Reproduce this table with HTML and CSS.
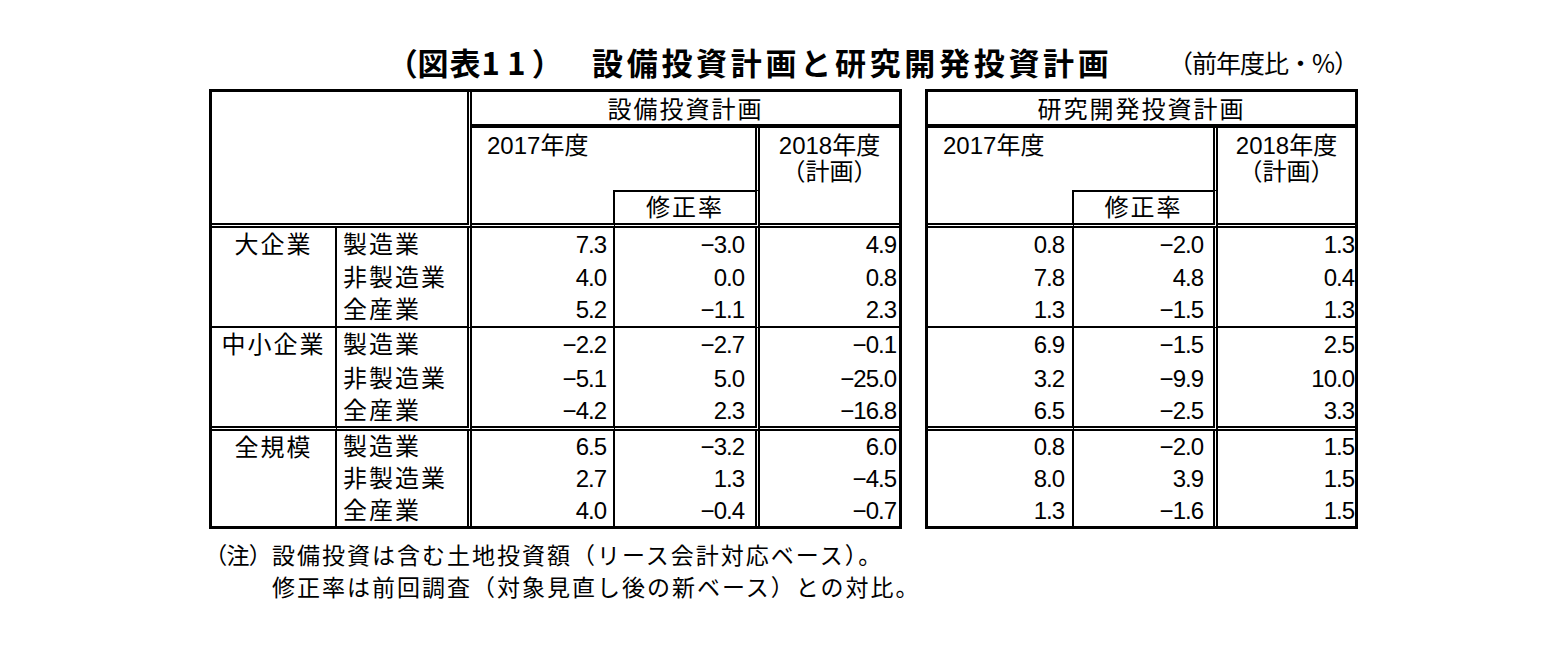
FILE: index.html
```html
<!DOCTYPE html>
<html lang="ja">
<head>
<meta charset="utf-8">
<title>（図表11） 設備投資計画と研究開発投資計画</title>
<link rel="stylesheet" href="styles.css">
</head>
<body>
<div class="page">
  <header class="head">
    <h1 class="title"><span class="fig">（図表<span class="fig-no">11</span>）</span><span class="main">設備投資計画と研究開発投資計画</span></h1>
    <span class="unit">（前年度比・%）</span>
  </header>

  <div class="tables">
    <table class="tbl tbl-capex">
      <colgroup>
        <col class="w-size"><col class="w-ind"><col class="w-a"><col class="w-b"><col class="w-c">
      </colgroup>
      <thead>
        <tr class="r-title">
          <th class="corner" colspan="2" rowspan="3"></th>
          <th class="title-cell jp" colspan="3">設備投資計画</th>
        </tr>
        <tr class="r-year">
          <th class="y17" colspan="2">2017年度</th>
          <th class="y18" rowspan="2">2018年度<br>（計画）</th>
        </tr>
        <tr class="r-rev">
          <th class="pad"></th>
          <th class="rev jp">修正率</th>
        </tr>
      </thead>
      <tbody class="g1">
        <tr><th class="size jp" rowspan="3">大企業</th><th class="ind jp">製造業</th><td class="a">7.3</td><td class="b">−3.0</td><td class="c">4.9</td></tr>
        <tr><th class="ind jp">非製造業</th><td class="a">4.0</td><td class="b">0.0</td><td class="c">0.8</td></tr>
        <tr class="last"><th class="ind jp">全産業</th><td class="a">5.2</td><td class="b">−1.1</td><td class="c">2.3</td></tr>
      </tbody>
      <tbody class="g2">
        <tr><th class="size jp" rowspan="3">中小企業</th><th class="ind jp">製造業</th><td class="a">−2.2</td><td class="b">−2.7</td><td class="c">−0.1</td></tr>
        <tr><th class="ind jp">非製造業</th><td class="a">−5.1</td><td class="b">5.0</td><td class="c">−25.0</td></tr>
        <tr class="last"><th class="ind jp">全産業</th><td class="a">−4.2</td><td class="b">2.3</td><td class="c">−16.8</td></tr>
      </tbody>
      <tbody class="g3">
        <tr><th class="size jp" rowspan="3">全規模</th><th class="ind jp">製造業</th><td class="a">6.5</td><td class="b">−3.2</td><td class="c">6.0</td></tr>
        <tr><th class="ind jp">非製造業</th><td class="a">2.7</td><td class="b">1.3</td><td class="c">−4.5</td></tr>
        <tr class="last"><th class="ind jp">全産業</th><td class="a">4.0</td><td class="b">−0.4</td><td class="c">−0.7</td></tr>
      </tbody>
    </table>

    <table class="tbl tbl-rd">
      <colgroup>
        <col class="rw-a"><col class="rw-b"><col class="rw-c">
      </colgroup>
      <thead>
        <tr class="r-title">
          <th class="title-cell jp" colspan="3">研究開発投資計画</th>
        </tr>
        <tr class="r-year">
          <th class="y17" colspan="2">2017年度</th>
          <th class="y18" rowspan="2">2018年度<br>（計画）</th>
        </tr>
        <tr class="r-rev">
          <th class="pad"></th>
          <th class="rev jp">修正率</th>
        </tr>
      </thead>
      <tbody class="g1">
        <tr><td class="a">0.8</td><td class="b">−2.0</td><td class="c">1.3</td></tr>
        <tr><td class="a">7.8</td><td class="b">4.8</td><td class="c">0.4</td></tr>
        <tr class="last"><td class="a">1.3</td><td class="b">−1.5</td><td class="c">1.3</td></tr>
      </tbody>
      <tbody class="g2">
        <tr><td class="a">6.9</td><td class="b">−1.5</td><td class="c">2.5</td></tr>
        <tr><td class="a">3.2</td><td class="b">−9.9</td><td class="c">10.0</td></tr>
        <tr class="last"><td class="a">6.5</td><td class="b">−2.5</td><td class="c">3.3</td></tr>
      </tbody>
      <tbody class="g3">
        <tr><td class="a">0.8</td><td class="b">−2.0</td><td class="c">1.5</td></tr>
        <tr><td class="a">8.0</td><td class="b">3.9</td><td class="c">1.5</td></tr>
        <tr class="last"><td class="a">1.3</td><td class="b">−1.6</td><td class="c">1.5</td></tr>
      </tbody>
    </table>
  </div>

  <div class="note">
    <span class="note-label">（注）</span>
    <div class="note-body">
      <p>設備投資は含む土地投資額（リース会計対応ベース）。</p>
      <p>修正率は前回調査（対象見直し後の新ベース）との対比。</p>
    </div>
  </div>
</div>
</body>
</html>
```

FILE: styles.css
```css
* { box-sizing: border-box; margin: 0; padding: 0; }
html, body { background: #fff; }
body {
  font-family: "Noto Sans CJK JP", sans-serif;
  color: #000;
  width: 1562px;
  height: 650px;
  overflow: hidden;
}

.page { padding-left: 209px; }

/* ---------- heading ---------- */
.head {
  display: flex;
  align-items: center;
  width: 1149px;
  height: 89px;
  padding-top: 34px;
}
.title {
  display: flex;
  align-items: center;
  margin-left: 192px;
  font-size: 31px;
  font-weight: 700;
  line-height: 36px;
  white-space: nowrap;
}
.fig {
  display: inline-block;
  width: 191px;
  letter-spacing: 1px;
  font-feature-settings: "palt";
}
.fig-no { letter-spacing: 7.5px; }
.main { letter-spacing: 3.7px; }
.unit {
  margin-left: auto;
  padding-right: 0;
  font-size: 25px;
  line-height: 32px;
  letter-spacing: -1px;
  white-space: nowrap;
}

/* ---------- tables ---------- */
.tables {
  display: flex;
  align-items: flex-start;
  gap: 23px;
}
.tbl {
  border-collapse: separate;
  border-spacing: 0;
  border: 3px solid #000;
  table-layout: fixed;
  font-family: "Liberation Sans", "Noto Sans CJK JP", sans-serif;
  font-size: 24px;
}
.tbl-capex { width: 693px; }
.tbl-rd { width: 433px; }

.w-size { width: 125px; }
.w-ind { width: 135px; }
.w-a { width: 143px; }
.w-b { width: 145px; }
.w-c { width: 139px; }

.rw-a { width: 146px; }
.rw-b { width: 144px; }
.rw-c { width: 137px; }

.tbl th, .tbl td {
  padding: 0;
  font-weight: 400;
  line-height: 1;
  vertical-align: middle;
  white-space: nowrap;
}
.jp { letter-spacing: 2px; }

.r-title { height: 36px; }
.r-year { height: 62px; }
.r-rev { height: 38px; }

.tbl .corner {
  border-right: 5px double #000;
  border-bottom: 5px double #000;
}
.tbl .title-cell {
  border-bottom: 4px solid #000;
  text-align: center;
  padding-top: 3px;
}
.tbl .y17 {
  border-right: 5px double #000;
  text-align: left;
  vertical-align: top;
  padding: 5px 0 0 15px;
  line-height: 26px;
}
.tbl .y18 {
  border-bottom: 5px double #000;
  text-align: center;
  vertical-align: top;
  padding-top: 5px;
  line-height: 26px;
}
.tbl .pad {
  border-right: 2px solid #000;
  border-bottom: 5px double #000;
}
.tbl .rev {
  border-top: 2px solid #000;
  border-right: 5px double #000;
  border-bottom: 5px double #000;
  text-align: center;
}

/* data rows */
.g1 tr { height: 33px; }
.g1 tr.last { height: 34px; }
.g2 tr { height: 34px; }
.g2 tr.last { height: 35px; }
.g3 tr { height: 32px; }
.g3 tr.last { height: 31px; }

.tbl .size {
  border-right: 2px solid #000;
  text-align: center;
  vertical-align: top;
  line-height: 33px;
}
.tbl .ind {
  border-right: 5px double #000;
  text-align: left;
  padding-left: 6px;
}
.g1 tr.last > *, .g1 .size { border-bottom: 2px solid #000; }
.g2 tr.last > *, .g2 .size { border-bottom: 5px double #000; }

.tbl td {
  text-align: right;
  letter-spacing: -1px;
}
.tbl td.a { border-right: 2px solid #000; }
.tbl td.b { border-right: 5px double #000; }

.tbl-capex td.a { padding-right: 7px; }
.tbl-capex td.b { padding-right: 11px; }
.tbl-capex td.c { padding-right: 3px; }
.tbl-rd td.a { padding-right: 8px; }
.tbl-rd td.b { padding-right: 10px; }
.tbl-rd td.c { padding-right: 1px; }

/* ---------- note ---------- */
.note {
  display: flex;
  margin-top: 9px;
  font-size: 23px;
  line-height: 32px;
  letter-spacing: 2px;
}
.note-label {
  width: 63px;
  padding-left: 6px;
  letter-spacing: 0;
  font-feature-settings: "palt";
}
```
